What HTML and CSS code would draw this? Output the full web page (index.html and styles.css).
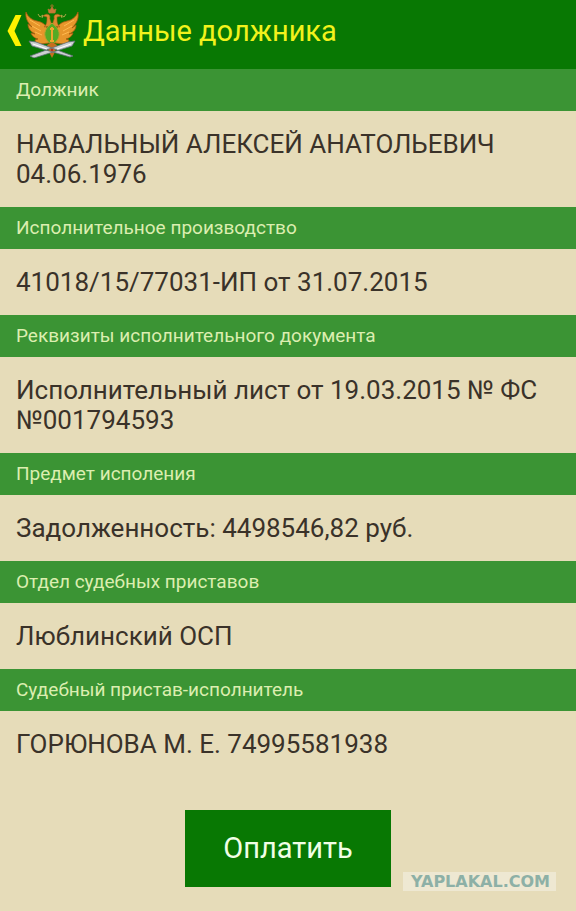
FILE: index.html
```html
<!DOCTYPE html>
<html lang="ru">
<head>
    <meta charset="UTF-8">
    <meta name="viewport" content="width=device-width, initial-scale=1.0">
    <title>Данные должника</title>
    <link rel="stylesheet" href="styles.css">
</head>
<body>
    <header class="header">
        <button class="back-btn" type="button" aria-label="Назад">
            <svg class="arrow" viewBox="0 0 16 34" aria-hidden="true">
                <path d="M9 1h6L8 17l7 15H9L1 17z" fill="#fff200"/>
            </svg>
            <svg class="emblem" viewBox="0 0 54 54" aria-hidden="true">
                <!-- wings -->
                <path d="M1 8c2 5 6 8 11 9 5 1 8 3 10 7l2 15-9 1c-3 0-5-2-5-4l3-1c-4-1-6-3-7-6l4 1C5 27 3 24 3 20l4 3C3 19 0 14 1 8z" fill="#e7962b" stroke="#a75a12" stroke-width=".8"/>
                <path d="M53 8c-2 5-6 8-11 9-5 1-8 3-10 7l-2 15 9 1c3 0 5-2 5-4l-3-1c4-1 6-3 7-6l-4 1c5-2 7-5 7-9l-4 3c4-4 7-9 6-15z" fill="#e7962b" stroke="#a75a12" stroke-width=".8"/>
                <path d="M5 16l10 6M7 22l9 5M10 28l7 3M49 16l-10 6M47 22l-9 5M44 28l-7 3" stroke="#ffb950" fill="none"/>
                <!-- heads and crown -->
                <path d="M26 22c1-5-2-6-1-9 0-3-4-4-7-1l4 1c0 5 0 7-3 10zM28 22c-1-5 2-6 1-9 0-3 4-4 7-1l-4 1c0 5 0 7 3 10z" fill="#df8b30" stroke="#a45c19" stroke-width=".6"/>
                <path d="M23 5l2 1 2-3 2 3 2-1-1 4h-6zM27 0v4M25 2h4" fill="#c87a38" stroke="#c17632" stroke-width=".7"/>
                <path d="M13 10l2 3 3-2-1 3M41 10l-2 3-3-2 1 3" fill="none" stroke="#a8a747"/>
                <!-- shield -->
                <path d="M27 19c5 4 8 8 7 13-1 5-4 6-7 9-3-3-6-4-7-9-1-5 2-9 7-13z" fill="#55aa25" stroke="#b9a12e"/>
                <path d="M27 23v15M25 25h4M25 37h4" stroke="#eea62f" stroke-width="2"/>
                <!-- tail and crossed swords -->
                <path d="M22 41l5-3 5 3-2 7-3 6-3-6z" fill="#c66e20"/>
                <path d="M4 37l7 1 37 14-3 1L7 42zM50 37l-7 1L5 52l4 2 38-12z" fill="#cdd0d2" stroke="#626d76" stroke-width=".8"/>
                <path d="M8 40l14 5M46 40l-14 5" stroke="#fff"/>
                <path d="M26 46h2" stroke="#b72828" stroke-width="2"/>
            </svg>
        </button>
        <h1 class="title">Данные должника</h1>
    </header>
    <main>
        <dl class="details">
            <dt>Должник</dt>
            <dd>НАВАЛЬНЫЙ АЛЕКСЕЙ АНАТОЛЬЕВИЧ<br>04.06.1976</dd>
            <dt>Исполнительное производство</dt>
            <dd>41018/15/77031-ИП от 31.07.2015</dd>
            <dt>Реквизиты исполнительного документа</dt>
            <dd>Исполнительный лист от 19.03.2015 № ФС №001794593</dd>
            <dt>Предмет исполения</dt>
            <dd>Задолженность: 4498546,82 руб.</dd>
            <dt>Отдел судебных приставов</dt>
            <dd>Люблинский ОСП</dd>
            <dt>Судебный пристав-исполнитель</dt>
            <dd>ГОРЮНОВА М. Е. 74995581938</dd>
        </dl>
        <div class="actions">
            <button class="pay-btn" type="button">Оплатить</button>
        </div>
    </main>
    <div class="watermark">YAPLAKAL.COM</div>
</body>
</html>
```
FILE: styles.css
```css
* {
    box-sizing: border-box;
}
body {
    margin: 0;
    min-height: 100vh;
    position: relative;
    font-family: Roboto, "Noto Sans", sans-serif;
    background-color: #e6dcb9;
    color: #3a3229;
}
.header {
    display: flex;
    align-items: center;
    height: 69px;
    padding: 0 6px 8px;
    background-color: #087803;
}
.back-btn {
    display: flex;
    align-items: center;
    padding: 0;
    border: none;
    background: none;
    cursor: pointer;
}
.arrow {
    width: 17px;
    height: 34px;
}
.emblem {
    width: 54px;
    height: 54px;
    margin-left: 2px;
}
.title {
    margin: 0 0 0 4px;
    font-size: 29px;
    line-height: 36px;
    font-weight: 400;
    color: #f2f21c;
}
.details {
    margin: 0;
}
.details dt {
    padding: 9px 16px;
    font-size: 19px;
    line-height: 24px;
    background-color: #3b9434;
    color: #dceeb0;
}
.details dd {
    margin: 0;
    padding: 18px 16px;
    font-size: 26px;
    line-height: 30px;
}
.actions {
    display: flex;
    justify-content: center;
    padding: 33px 16px 24px;
}
.pay-btn {
    padding: 20px 38px;
    border: none;
    background-color: #087803;
    color: #f0ffe6;
    font-family: inherit;
    font-size: 29px;
    line-height: 37px;
    cursor: pointer;
}
/* site mark over the bottom corner */
.watermark {
    position: absolute;
    right: 20px;
    bottom: 20px;
    padding: 0 6px 0 8px;
    font-family: "DejaVu Sans", sans-serif;
    font-size: 16px;
    line-height: 19px;
    font-weight: 700;
    background-color: #eee8d2;
    color: #8db0a6;
}
```
